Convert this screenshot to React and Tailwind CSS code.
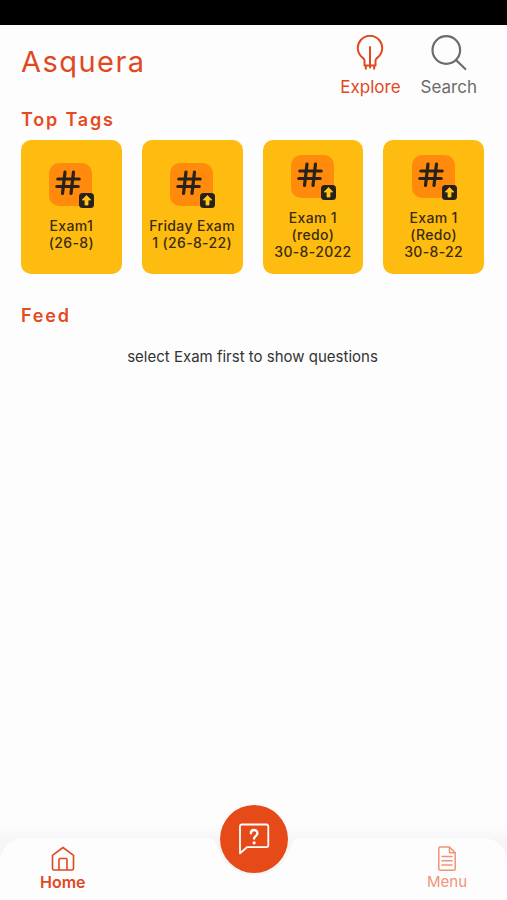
const tags = [
  { id: 1, lines: ["Exam1", "(26-8)"] },
  { id: 2, lines: ["Friday Exam", "1 (26-8-22)"] },
  { id: 3, lines: ["Exam 1", "(redo)", "30-8-2022"] },
  { id: 4, lines: ["Exam 1", "(Redo)", "30-8-22"] },
];

const BulbIcon = () => (
  <svg width="28" height="36" viewBox="0 0 28 36" fill="none" stroke="currentColor" strokeWidth="2" aria-hidden="true">
    <path d="M8.5 30.5V25.5C8.5 24 7.8 23.6 6.5 22.6A12.2 12.2 0 1 1 21.5 22.6C20.2 23.6 19.5 24 19.5 25.5V30.5Z" strokeLinejoin="round" />
    <path d="M14 12V31M9.8 31V33.8M14 31V32.5M18.2 31V33.8" strokeLinecap="round" />
  </svg>
);

const SearchIcon = () => (
  <svg width="36" height="36" viewBox="0 0 36 36" fill="none" stroke="currentColor" strokeWidth="2.2" strokeLinecap="round" aria-hidden="true">
    <circle cx="15.3" cy="15" r="13.8" />
    <path d="M25 25L34.3 34" />
  </svg>
);

const HashIcon = () => (
  <svg width="48" height="46" viewBox="0 0 48 46" fill="none" aria-hidden="true">
    <rect x="2" y="0" width="43" height="43" rx="10" fill="#ff8a0c" />
    <path d="M18 9L15.5 30.5M26.5 9L24 30.5M10.8 16H32.2M9.8 23.5H31.2" stroke="#28221a" strokeWidth="3.2" strokeLinecap="round" />
    <rect x="32" y="30" width="15" height="15" rx="3.5" fill="#28221a" />
    <path d="M39.5 32.5L43.8 37H41V42H38V37H35.2Z" fill="#ffc51c" stroke="#ffc51c" strokeWidth="0.8" strokeLinejoin="round" />
  </svg>
);

const HomeIcon = () => (
  <svg width="24" height="26" viewBox="0 0 24 26" fill="none" stroke="currentColor" strokeWidth="1.6" strokeLinejoin="round" aria-hidden="true">
    <path d="M1.5 9.3L12 1.5L22.5 9.3V22.5A1.5 1.5 0 0 1 21 24H3A1.5 1.5 0 0 1 1.5 22.5Z" />
    <path d="M8 24V13.5A1 1 0 0 1 9 12.5H15A1 1 0 0 1 16 13.5V24" />
  </svg>
);

const MenuIcon = () => (
  <svg width="20" height="26" viewBox="0 0 20 26" fill="none" stroke="currentColor" strokeWidth="1.5" strokeLinejoin="round" aria-hidden="true">
    <path d="M12.5 1H3A1.2 1.2 0 0 0 1.8 2.2V23A1.2 1.2 0 0 0 3 24.2H17A1.2 1.2 0 0 0 18.2 23V6.8Z" />
    <path d="M12.5 1V6.8H18.2" />
    <path d="M5 10.5H15M5 14.7H15M5 18.9H15" strokeLinecap="round" />
  </svg>
);

const QuestionIcon = () => (
  <svg width="32" height="32" viewBox="0 0 32 32" fill="none" stroke="currentColor" strokeLinejoin="round" aria-hidden="true">
    <path d="M3.5 1.5H28.5A1.8 1.8 0 0 1 30.3 3.3V22.4A1.8 1.8 0 0 1 28.5 24.2H9L2 30.3V3.3A1.8 1.8 0 0 1 3.5 1.5Z" strokeWidth="1.8" />
    <path d="M12.9 10.3C12.9 6 19.4 6 19.4 10.2C19.4 13.2 16.1 13 16.1 15.6" strokeWidth="2.4" strokeLinecap="round" />
    <circle cx="16.1" cy="19.8" r="1.6" fill="currentColor" stroke="none" />
  </svg>
);

const NotchCurve = () => (
  <svg width="92" height="40" viewBox="0 0 92 40" className="absolute top-0 left-1/2 -translate-x-1/2" aria-hidden="true">
    <path d="M0 0C6 0 8 4 9 8A38 38 0 0 0 83 8C84 4 86 0 92 0Z" fill="#f5f5f5" />
  </svg>
);

const App = () => {
  return (
    <div className="flex min-h-screen flex-col bg-[#fdfdfd] font-['Inter',sans-serif]">
      {/* Status bar */}
      <div className="h-[25px] bg-black" />

      <header className="flex items-start justify-between pt-[10px] pr-[30px] pl-[21px]">
        <h1 className="pt-[5px] text-[29px] leading-[44px] tracking-wider text-[#e0491f]">Asquera</h1>
        <div className="flex gap-5">
          <button type="button" className="flex flex-col items-center gap-1 text-[17px] leading-6 text-[#e0491f]">
            <BulbIcon />
            Explore
          </button>
          <button type="button" className="flex flex-col items-center gap-1 text-[17px] leading-6 text-[#6b6b6b]">
            <SearchIcon />
            Search
          </button>
        </div>
      </header>

      <main className="flex-1 pr-[23px] pl-[21px]">
        {/* Top tags */}
        <h2 className="mt-[7px] text-[18px] leading-7 font-semibold tracking-widest text-[#e64a1e]">Top Tags</h2>
        <div className="mt-[6px] grid grid-cols-4 gap-5">
          {tags.map((tag) => (
            <button
              key={tag.id}
              type="button"
              className="flex h-[134px] flex-col items-center justify-center gap-2 rounded-[10px] bg-[#ffbc10] text-[#3a2c10]"
            >
              <HashIcon />
              <span className="text-[14px] leading-[17px] font-medium tracking-wide whitespace-nowrap">
                {tag.lines.map((line) => (
                  <span key={line} className="block">
                    {line}
                  </span>
                ))}
              </span>
            </button>
          ))}
        </div>

        {/* Feed */}
        <h2 className="mt-7 text-[18px] leading-7 font-semibold tracking-widest text-[#e64a1e]">Feed</h2>
        <p className="mt-[15px] text-center text-[15px] leading-6 text-[#333333]">select Exam first to show questions</p>
      </main>

      {/* Bottom navigation */}
      <nav className="sticky bottom-0 bg-[#f6f6f6] shadow-[0_-2px_10px_4px_#f6f6f6]">
        <div className="flex justify-between rounded-t-3xl bg-[#fdfdfd] px-10 pt-2 pb-2">
          <a href="#home" className="flex flex-col items-center text-[16px] leading-5 font-semibold text-[#e0491f]">
            <HomeIcon />
            Home
          </a>
          <a href="#menu" className="flex flex-col items-center text-[15px] leading-5 text-[#f09478]">
            <MenuIcon />
            Menu
          </a>
        </div>
        <NotchCurve />
        <button
          type="button"
          aria-label="Ask a question"
          className="absolute -top-[33px] left-1/2 flex size-[68px] -translate-x-1/2 items-center justify-center rounded-full bg-[#e64a19] text-white"
        >
          <QuestionIcon />
        </button>
      </nav>
    </div>
  );
};

export default App;
